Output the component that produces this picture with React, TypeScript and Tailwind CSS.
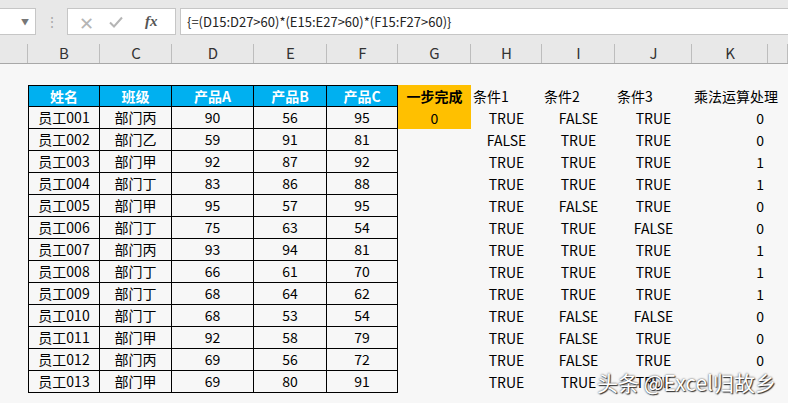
import React from 'react'

type Row = {
  name: string
  dept: string
  a: number
  b: number
  c: number
}

const rows: Row[] = [
  { name: '员工001', dept: '部门丙', a: 90, b: 56, c: 95 },
  { name: '员工002', dept: '部门乙', a: 59, b: 91, c: 81 },
  { name: '员工003', dept: '部门甲', a: 92, b: 87, c: 92 },
  { name: '员工004', dept: '部门丁', a: 83, b: 86, c: 88 },
  { name: '员工005', dept: '部门甲', a: 95, b: 57, c: 95 },
  { name: '员工006', dept: '部门丁', a: 75, b: 63, c: 54 },
  { name: '员工007', dept: '部门丙', a: 93, b: 94, c: 81 },
  { name: '员工008', dept: '部门丁', a: 66, b: 61, c: 70 },
  { name: '员工009', dept: '部门丁', a: 68, b: 64, c: 62 },
  { name: '员工010', dept: '部门丁', a: 68, b: 53, c: 54 },
  { name: '员工011', dept: '部门甲', a: 92, b: 58, c: 79 },
  { name: '员工012', dept: '部门丙', a: 69, b: 56, c: 72 },
  { name: '员工013', dept: '部门甲', a: 69, b: 80, c: 91 },
]

const cols = 'grid grid-cols-[28px_72px_72px_82px_73px_71px_73px_71px_73px_77px_76px_20px]'
const letters = ['', 'B', 'C', 'D', 'E', 'F', 'G', 'H', 'I', 'J', 'K', '']

const box = 'h-[22px] border-r border-b border-black flex items-center justify-center'
const head = 'h-[22px] border-r border-b border-t border-black bg-[#00b0f0] text-white font-bold flex items-center justify-center'
const plain = 'h-[22px] flex items-center'

export default function App() {
  return (
    <div
      className="w-[788px] h-[403px] overflow-hidden bg-[#f7f7f7] relative text-[14px] text-black"
      style={{ fontFamily: '"Noto Sans CJK SC", "Noto Sans", sans-serif' }}
    >
      {/* formula bar */}
      <div className="h-[36px] bg-[#e8e8e8] flex items-start pt-[8px]">
        <div className="w-[36px] h-[27px] bg-white border border-[#c6c6c6] border-l-0 flex items-center justify-end pr-[6px]">
          <span className="text-[8px] text-[#777]">▼</span>
        </div>
        <div className="w-[31px] h-[27px] flex items-center justify-center text-[#aaa] text-[14px]">⋮</div>
        <div className="w-[109px] h-[27px] bg-white border border-[#c6c6c6] flex items-center">
          <span className="w-[36px] text-center text-[#b5b5b5] text-[18px] leading-none">✕</span>
          <svg width="16" height="14" viewBox="0 0 16 14" className="ml-[4px]">
            <path d="M2 7.5 L6 11.5 L14 2.5" stroke="#b5b5b5" strokeWidth="2" fill="none" />
          </svg>
          <span
            className="ml-[21px] text-[#555] italic font-bold text-[15px]"
            style={{ fontFamily: '"Liberation Serif", serif' }}
          >
            fx
          </span>
        </div>
        <div className="flex-1 ml-[4px] h-[27px] bg-white border border-[#c6c6c6] border-r-0 flex items-center pl-[6px] text-[13px] text-[#222]">
          {'{=(D15:D27>60)*(E15:E27>60)*(F15:F27>60)}'}
        </div>
      </div>

      {/* column letters */}
      <div className={`${cols} h-[28px] bg-[#e8e8e8] border-b border-[#a8a8a8]`}>
        {letters.map((l, i) => (
          <div
            key={i}
            className="relative flex items-end justify-center leading-[20px] text-[15px] text-[#333] after:absolute after:right-0 after:bottom-0 after:h-[19px] after:w-px after:bg-[#bdbdbd]"
          >
            {l}
          </div>
        ))}
      </div>

      {/* sheet */}
      <div className={`${cols} mt-[21px]`}>
        <div />
        <div className={`${head} border-l`}>姓名</div>
        <div className={head}>班级</div>
        <div className={head}>产品A</div>
        <div className={head}>产品B</div>
        <div className={head}>产品C</div>
        <div className={`${plain} justify-center bg-[#ffc000] font-bold`}>一步完成</div>
        <div className={`${plain} pl-[2px]`}>条件1</div>
        <div className={`${plain} pl-[2px]`}>条件2</div>
        <div className={`${plain} pl-[2px]`}>条件3</div>
        <div className={`${plain} pl-[2px] whitespace-nowrap`}>乘法运算处理</div>
        <div />

        {rows.map((r, i) => {
          const c1 = r.a > 60
          const c2 = r.b > 60
          const c3 = r.c > 60
          const last = i === rows.length - 1
          return (
            <React.Fragment key={r.name}>
              <div />
              <div className={`${box} border-l`}>{r.name}</div>
              <div className={box}>{r.dept}</div>
              <div className={box}>{r.a}</div>
              <div className={box}>{r.b}</div>
              <div className={box}>{r.c}</div>
              <div className={`${plain} justify-center ${i === 0 ? 'bg-[#ffc000]' : ''}`}>{i === 0 ? '0' : ''}</div>
              <div className={`${plain} justify-center`}>{c1 ? 'TRUE' : 'FALSE'}</div>
              <div className={`${plain} justify-center`}>{c2 ? 'TRUE' : 'FALSE'}</div>
              <div className={`${plain} justify-center`}>{c3 ? 'TRUE' : 'FALSE'}</div>
              <div className={`${plain} justify-end pr-[4px]`}>{last ? '' : c1 && c2 && c3 ? 1 : 0}</div>
              <div />
            </React.Fragment>
          )
        })}
      </div>

      {/* watermark */}
      <div
        className="absolute left-[597px] top-[367px] text-[21px] text-white whitespace-nowrap"
        style={{ textShadow: '0 0 2px #333, 1px 1px 1px #333' }}
      >
        头条 @Excel归故乡
      </div>
    </div>
  )
}
